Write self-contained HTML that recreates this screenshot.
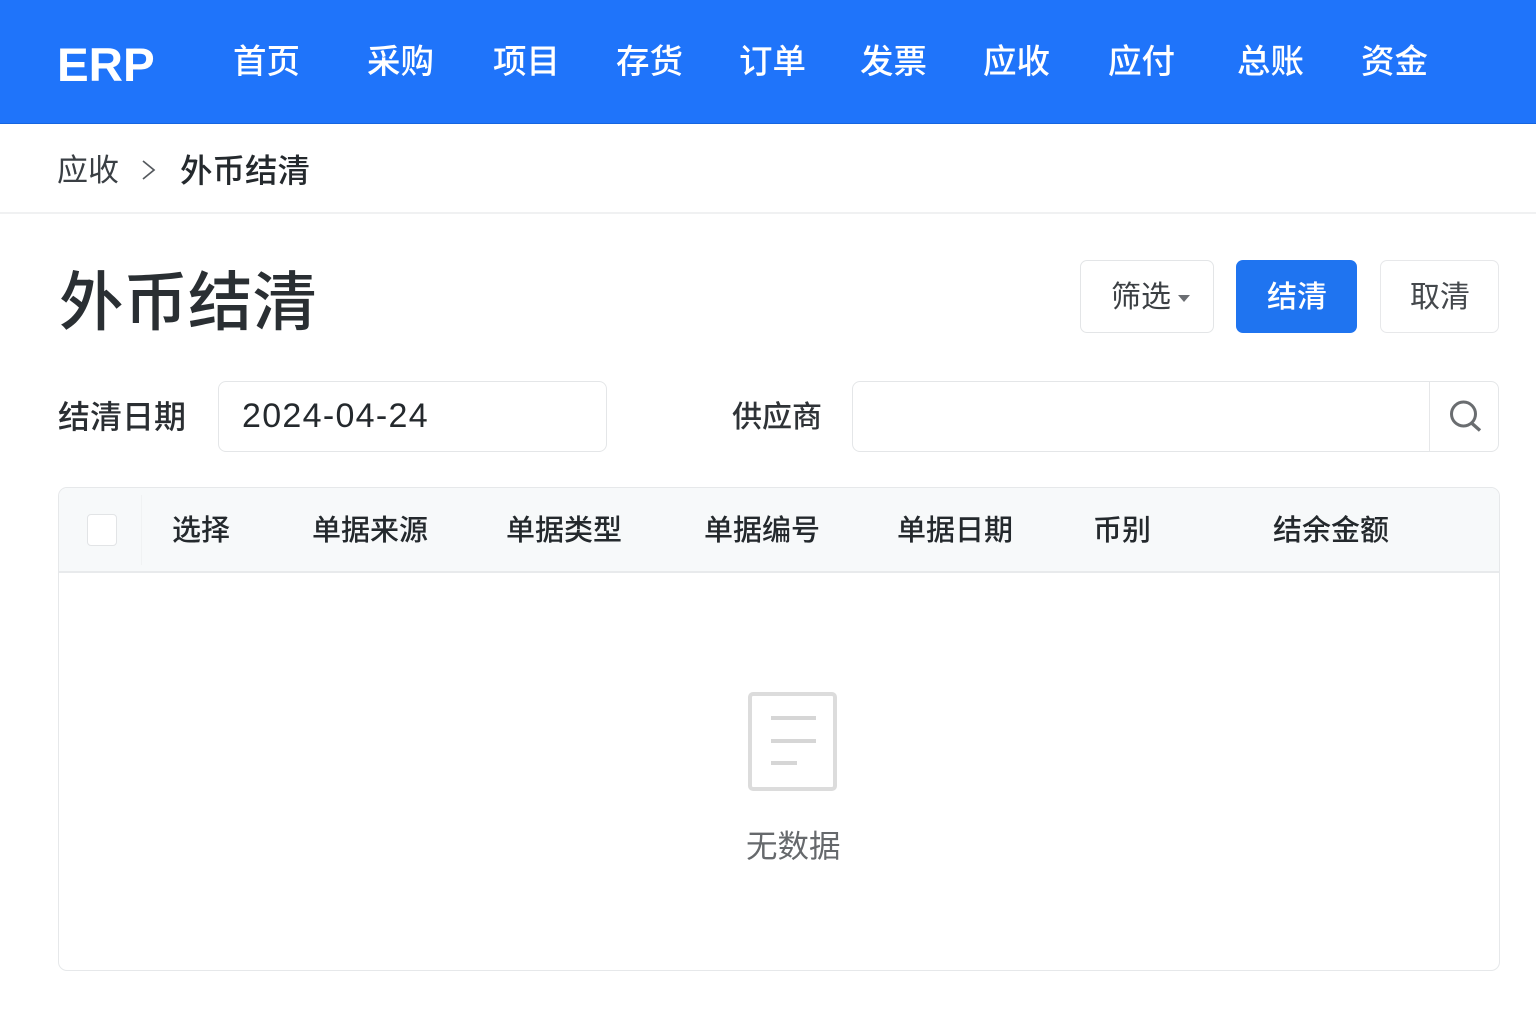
<!DOCTYPE html>
<html lang="zh-CN">
<head>
<meta charset="utf-8">
<title>外币结清</title>
<style>
html,body{margin:0;padding:0;width:1536px;height:1024px;overflow:hidden;background:#fff}
body{position:relative;font-family:"Liberation Sans","Noto Sans CJK SC",sans-serif;color:#212529}
.t,.b{position:absolute;white-space:nowrap}
.t{line-height:1}
.b{box-sizing:border-box}
.nav{top:46px;font-size:33.5px;font-weight:500;color:#fff}
.th{top:517px;font-size:29px;font-weight:500;color:#24292d}
</style>
</head>
<body>
<div class="b" style="left:0;top:0;width:1536px;height:124px;background:#1f74fa;border-bottom:1px solid #1565e0"></div>
<div class="t" style="left:57px;top:42px;font-size:47.5px;font-weight:700;color:#fff">ERP</div>
<div class="t nav" style="left:233px">首页</div>
<div class="t nav" style="left:367px">采购</div>
<div class="t nav" style="left:493px">项目</div>
<div class="t nav" style="left:616px">存货</div>
<div class="t nav" style="left:739px">订单</div>
<div class="t nav" style="left:860px">发票</div>
<div class="t nav" style="left:983px">应收</div>
<div class="t nav" style="left:1108px">应付</div>
<div class="t nav" style="left:1237px">总账</div>
<div class="t nav" style="left:1361px">资金</div>

<div class="b" style="left:0;top:212px;width:1536px;height:2px;background:#f0f1f2"></div>
<div class="t" style="left:57px;top:155px;font-size:31px;color:#3a3f44">应收</div>
<svg class="b" style="left:139px;top:158px" width="20" height="24" viewBox="0 0 20 24"><path d="M4 3 L15 12 L4 21" fill="none" stroke="#55595e" stroke-width="1.7"/></svg>
<div class="t" style="left:180px;top:155px;font-size:32.5px;font-weight:500;color:#24292d">外币结清</div>

<div class="t" style="left:59px;top:271px;font-size:64.5px;font-weight:500;color:#2a2f33">外币结清</div>

<div class="b" style="left:1080px;top:260px;width:134px;height:73px;border:1px solid #e3e5e7;border-radius:7px;background:#fff"></div>
<div class="t" style="left:1111px;top:283px;font-size:30px;color:#3b3f43">筛选</div>
<div class="b" style="left:1178px;top:295px;width:0;height:0;border-left:6.5px solid transparent;border-right:6.5px solid transparent;border-top:7px solid #6b6e72"></div>
<div class="b" style="left:1236px;top:260px;width:121px;height:73px;border-radius:7px;background:#1f74f0"></div>
<div class="t" style="left:1267px;top:283px;font-size:30px;font-weight:500;color:#fff">结清</div>
<div class="b" style="left:1380px;top:260px;width:119px;height:73px;border:1px solid #e7e8ea;border-radius:7px;background:#fff"></div>
<div class="t" style="left:1410px;top:283px;font-size:30px;color:#44484c">取清</div>

<div class="t" style="left:58px;top:401px;font-size:32px;font-weight:500;color:#2a2e32">结清日期</div>
<div class="b" style="left:218px;top:381px;width:389px;height:71px;border:1px solid #e4e6e8;border-radius:8px;background:#fff"></div>
<div class="t" style="left:242px;top:399px;font-size:34px;letter-spacing:1.3px;color:#24292d">2024-04-24</div>

<div class="t" style="left:732px;top:403px;font-size:30px;font-weight:500;color:#2f3337">供应商</div>
<div class="b" style="left:852px;top:381px;width:647px;height:71px;border:1px solid #e4e6e8;border-radius:8px;background:#fff"></div>
<div class="b" style="left:1429px;top:382px;width:1px;height:69px;background:#e6e7e9"></div>
<svg class="b" style="left:1446px;top:397px" width="38" height="38" viewBox="0 0 38 38"><circle cx="17.5" cy="17" r="12" fill="none" stroke="#6a6d70" stroke-width="3"/><path d="M25.5 26 L34 33.5" fill="none" stroke="#6a6d70" stroke-width="3.4"/></svg>

<div class="b" style="left:58px;top:487px;width:1442px;height:484px;border:1px solid #e6e8ea;border-radius:9px;background:#fff;overflow:hidden">
  <div class="b" style="left:0;top:0;width:1440px;height:85px;background:#f7f9fa;border-bottom:2px solid #e8eaec"></div>
</div>
<div class="b" style="left:87px;top:514px;width:30px;height:32px;border:1px solid #e2e4e6;border-radius:4px;background:#fff"></div>
<div class="b" style="left:141px;top:495px;width:1px;height:70px;background:#f0f2f3"></div>
<div class="t th" style="left:172px">选择</div>
<div class="t th" style="left:312px">单据来源</div>
<div class="t th" style="left:506px">单据类型</div>
<div class="t th" style="left:704px">单据编号</div>
<div class="t th" style="left:897px">单据日期</div>
<div class="t th" style="left:1093px">币别</div>
<div class="t th" style="left:1273px">结余金额</div>

<svg class="b" style="left:747px;top:691px" width="92" height="101" viewBox="0 0 92 101">
  <rect x="3" y="3" width="85" height="95" rx="3" fill="#fff" stroke="#dcdcdc" stroke-width="4"/>
  <path d="M24 27 H69 M24 50 H69 M24 72 H50" fill="none" stroke="#d6d6d6" stroke-width="4"/>
</svg>
<div class="t" style="left:746px;top:831px;font-size:31.5px;color:#66696c">无数据</div>
</body>
</html>
